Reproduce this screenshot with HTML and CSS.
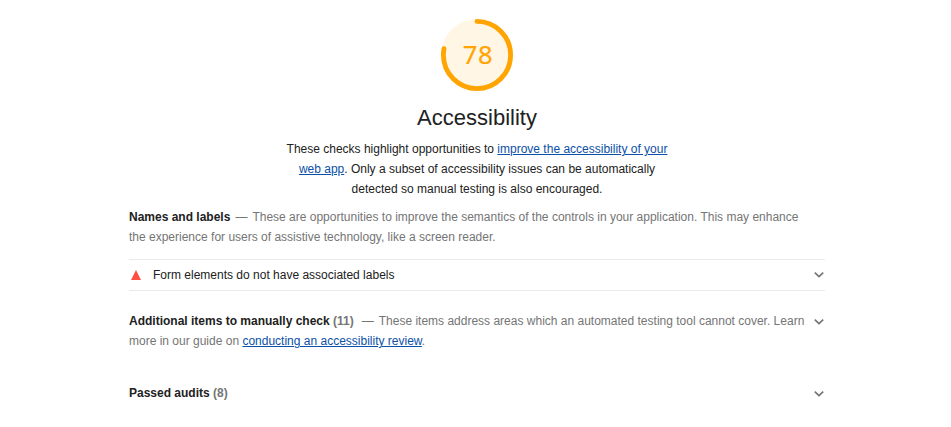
FILE: index.html
```html
<!DOCTYPE html>
<html lang="en">
<head>
<meta charset="utf-8">
<title>Accessibility</title>
<link rel="stylesheet" href="styles.css">
</head>
<body>
<main class="category">
  <header class="header">
    <div class="gauge">
      <svg class="gauge-svg" viewBox="0 0 120 120">
        <circle class="gauge-base" cx="60" cy="60" r="60"/>
        <circle class="gauge-arc" cx="60" cy="60" r="56" pathLength="100" transform="rotate(-90 60 60)"/>
      </svg>
      <div class="gauge-value">78</div>
    </div>
    <h1 class="title">Accessibility</h1>
    <p class="description">These checks highlight opportunities to <a href="#">improve the accessibility of your<br>web app</a>. Only a subset of accessibility issues can be automatically<br>detected so manual testing is also encouraged.</p>
  </header>
  <section class="group">
    <p class="summary"><b>Names and labels</b><span class="dash">—</span>These are opportunities to improve the semantics of the controls in your application. This may enhance<br>the experience for users of assistive technology, like a screen reader.</p>
    <div class="audit">
      <span class="fail"></span>
      <span class="audit-title">Form elements do not have associated labels</span>
      <svg class="chevron" viewBox="0 0 12 12"><path d="M1.8 3.6l4.2 4 4.2-4"/></svg>
    </div>
  </section>
  <section class="clump manual">
    <p class="summary"><b>Additional items to manually check <span class="count">(11)</span></b><span class="dash wide">—</span>These items address areas which an automated testing tool cannot cover. Learn<br>more in our guide on <a href="#">conducting an accessibility review</a>.</p>
    <svg class="chevron" viewBox="0 0 12 12"><path d="M1.8 3.6l4.2 4 4.2-4"/></svg>
  </section>
  <section class="clump">
    <p class="summary"><b>Passed audits <span class="count">(8)</span></b></p>
    <svg class="chevron" viewBox="0 0 12 12"><path d="M1.8 3.6l4.2 4 4.2-4"/></svg>
  </section>
</main>
</body>
</html>
```
FILE: styles.css
```css
body { margin: 0; background: #fff; color: #212121; font: 12px/20px "Liberation Sans", Arial, sans-serif; }
p, h1 { margin: 0; }
a { color: #0c50a7; text-decoration: underline; }
.category { width: 696px; margin-left: 129px; padding-top: 19px; }
.header { display: flex; flex-direction: column; align-items: center; }
.gauge { display: grid; width: 72px; height: 72px; }
.gauge-svg, .gauge-value { grid-area: 1 / 1; }
.gauge-svg { width: 72px; height: 72px; }
.gauge-base { fill: #fff6e5; }
.gauge-arc { fill: none; stroke: #ffa400; stroke-width: 8; stroke-linecap: round; stroke-dasharray: 78 100; }
.gauge-value { padding-left: 2px; color: #ffa400; font: 25.5px/71px "Noto Sans", sans-serif; letter-spacing: 0.6px; text-align: center; -webkit-text-stroke: 0.2px #ffa400; }
.title { margin-top: 11px; font-size: 22px; font-weight: 400; line-height: 32px; }
.description { margin-top: 5px; text-align: center; white-space: nowrap; }
.group { margin-top: 8px; }
.summary { color: #757575; white-space: nowrap; }
.summary b { color: #212121; }
.summary .count { color: #757575; }
.dash { margin: 0 5px; }
.dash.wide { margin-left: 8px; }
.audit { display: flex; align-items: center; height: 30px; margin-top: 12px; border-top: 1px solid #ebebeb; border-bottom: 1px solid #ebebeb; }
.fail { margin-left: 2px; border: 5px solid transparent; border-top: 0; border-bottom: 10px solid #ff4e42; }
.audit-title { margin-left: 12px; }
.chevron { width: 12px; height: 12px; margin-left: auto; fill: none; stroke: #757575; stroke-width: 1.7; }
.clump { display: flex; margin-top: 32px; }
.clump .chevron { margin-top: 5px; }
.clump.manual { margin-top: 20px; }
```
